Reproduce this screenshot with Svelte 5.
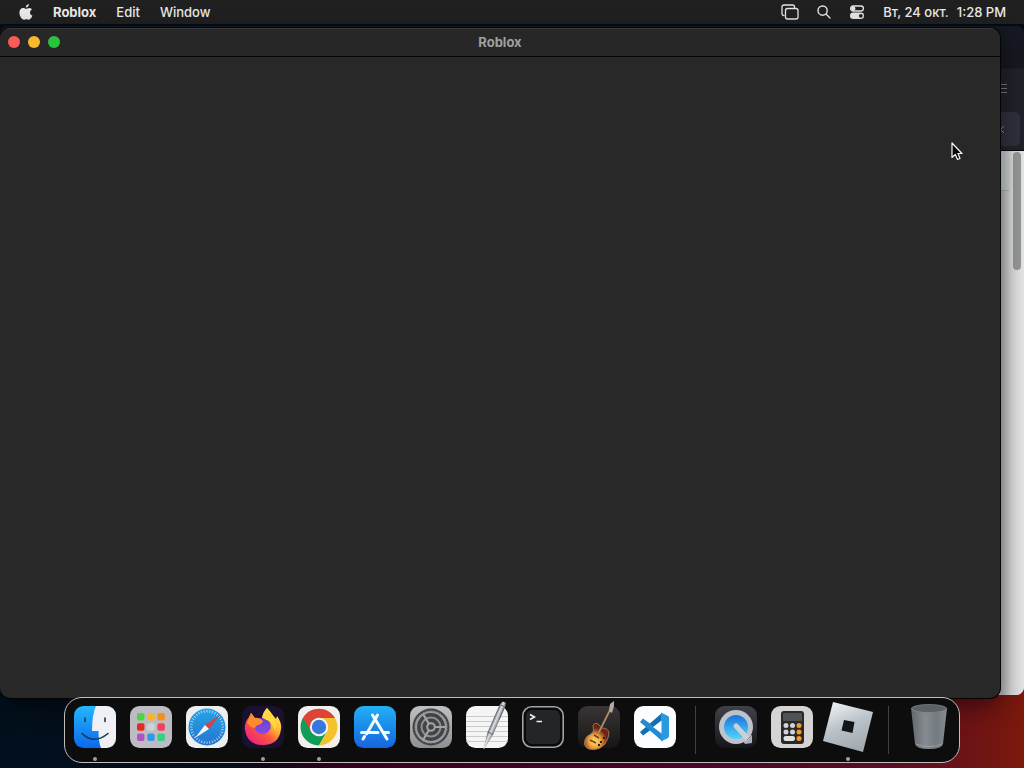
<script lang="ts">
	const menus = ['Edit', 'Window'];

	const groups = [
		[
			{ id: 'finder', label: 'Finder', running: true },
			{ id: 'launchpad', label: 'Launchpad', running: false },
			{ id: 'safari', label: 'Safari', running: false },
			{ id: 'firefox', label: 'Firefox', running: true },
			{ id: 'chrome', label: 'Google Chrome', running: true },
			{ id: 'store', label: 'App Store', running: false },
			{ id: 'settings', label: 'System Preferences', running: false },
			{ id: 'textedit', label: 'TextEdit', running: false },
			{ id: 'terminal', label: 'Terminal', running: false },
			{ id: 'garageband', label: 'GarageBand', running: false },
			{ id: 'vscode', label: 'Visual Studio Code', running: false }
		],
		[
			{ id: 'quicktime', label: 'QuickTime Player', running: false },
			{ id: 'calculator', label: 'Calculator', running: false },
			{ id: 'roblox', label: 'Roblox', running: true }
		],
		[{ id: 'trash', label: 'Trash', running: false }]
	];

	const pads = ['#4fd544', '#f6b52b', '#f5901e', '#e02a24', '#c9d3d8', '#f2415c', '#b052c8', '#2f9be8', '#35cf86'];
	const ticks = Array.from({ length: 36 }, (_, i) => i * 10);
	const teeth = Array.from({ length: 40 }, (_, i) => i * 9);
</script>

<svelte:head>
	<title>Roblox</title>
</svelte:head>

<div class="desktop">
	<header class="menubar">
		<nav>
			<button class="apple" aria-label="Apple menu">
				<svg width="14" height="16" viewBox="0 0 14 16">
					<path
						fill="#e9e9e9"
						d="M9.9 0C10 1.700 8.500 3.500 6.800 3.500 6.600 1.900 8.200.2 9.900 0zM12.900 5.400C11.600 6.200 11 7.200 11 8.400 11 9.900 11.900 11 13.400 11.600 12.800 13.500 11.300 15.800 9.900 15.800 9 15.800 8.500 15.200 7.400 15.200 6.300 15.200 5.700 15.800 4.900 15.800 2.900 15.800.4 12.200.4 8.600.4 5.700 2.200 4 4.100 4 5.400 4 6.400 4.800 7.200 4.800 7.900 4.800 9 3.900 10.500 3.900 11.300 3.900 12.300 4.400 12.900 5.400z"
					/>
				</svg>
			</button>
			<button class="app">Roblox</button>
			{#each menus as menu}
				<button>{menu}</button>
			{/each}
		</nav>
		<div class="status">
			<button aria-label="Screen Mirroring">
				<svg width="18" height="16" viewBox="0 0 18 16" fill="none" stroke="#e4e4e4" stroke-width="1.300">
					<path d="M3.500 11.500H3Q1 11.500 1 9.500V3Q1 1 3 1H11.500Q13.500 1 13.500 3V4" />
					<rect x="4.500" y="4.500" width="12.500" height="10.500" rx="2" />
				</svg>
			</button>
			<button aria-label="Spotlight">
				<svg width="14" height="14" viewBox="0 0 14 14" fill="none" stroke="#e4e4e4" stroke-width="1.400" stroke-linecap="round">
					<circle cx="5.600" cy="5.600" r="4.600" />
					<path d="M9 9L13 13" />
				</svg>
			</button>
			<button aria-label="Control Center">
				<svg width="16" height="14" viewBox="0 0 16 14">
					<rect x="1.600" y="1" width="12.800" height="5" rx="2.500" fill="none" stroke="#e4e4e4" stroke-width="1.300" />
					<circle cx="4.200" cy="3.500" r="2.200" fill="#e4e4e4" />
					<rect x="1" y="7.600" width="14" height="6.400" rx="3.200" fill="#e4e4e4" />
					<circle cx="11.800" cy="10.800" r="1.900" fill="#202020" />
				</svg>
			</button>
			<button class="clock"><span>Вт, 24 окт.</span><span>1:28 PM</span></button>
		</div>
	</header>

	<main class="workspace">
		<section class="browser" aria-label="Browser">
			<div class="browser-top">
				<svg class="lines" width="7" height="11" viewBox="0 0 7 11" stroke="#77757e"><path d="M0 1.500H7M0 5.500H7M0 9.500H7" /></svg>
				<div class="tab">
					<svg width="7" height="9" viewBox="0 0 7 9" fill="none" stroke="#8a8795"><path d="M5 1L1.500 4.500L5 8" /></svg>
				</div>
			</div>
			<div class="page"><div class="page-bar"></div><div class="thumb"></div></div>
		</section>

		<section class="window">
			<div class="titlebar">
				<div class="lights">
					<button class="close" aria-label="Close"></button>
					<button class="minimize" aria-label="Minimize"></button>
					<button class="zoom" aria-label="Zoom"></button>
				</div>
				<h1>Roblox</h1>
			</div>
			<div class="content"></div>
		</section>
	</main>

	<footer>
		<nav class="dock" aria-label="Dock">
			{#each groups as group, i}
				{#if i > 0}<div class="separator"></div>{/if}
				{#each group as item}
					<button class="item" aria-label={item.label}>
						<svg class="icon" width="42" height="42" viewBox="0 0 42 42">
							{#if item.id === 'finder'}
								<defs>
									<linearGradient id="finder-face" x2="0" y2="1"><stop stop-color="#23b8fd" /><stop offset="1" stop-color="#0c68ec" /></linearGradient>
									<clipPath id="finder-clip"><rect width="42" height="42" rx="9.500" /></clipPath>
								</defs>
								<g clip-path="url(#finder-clip)">
									<rect width="42" height="42" fill="url(#finder-face)" />
									<path fill="#eef0f5" d="M22 0H42V42H27Q24.500 36 24.500 25H18Q18 9 22 0z" />
									<path fill="none" stroke="#183750" stroke-width="1.600" stroke-linecap="round" d="M11 12V15.500M31 12V15.500" />
									<path fill="none" stroke="#183750" stroke-width="1.600" stroke-linecap="round" d="M8 27.500Q20 39 34 27.500" />
								</g>
							{:else if item.id === 'launchpad'}
								<rect width="42" height="42" rx="9.500" fill="#bdbcc0" />
								{#each pads as color, n}
									<rect x={7 + (n % 3) * 10.200} y={7 + Math.floor(n / 3) * 10.200} width="7.500" height="7.500" rx="2" fill={color} />
								{/each}
							{:else if item.id === 'safari'}
								<defs><linearGradient id="safari-dial" x2="0" y2="1"><stop stop-color="#24a5e7" /><stop offset="1" stop-color="#2774cf" /></linearGradient></defs>
								<rect width="42" height="42" rx="9.500" fill="#eceef0" />
								<circle cx="21" cy="21" r="18.500" fill="url(#safari-dial)" />
								{#each ticks as angle}
									<path d="M21 4V6.500" stroke="#d6effc" stroke-width=".7" transform="rotate({angle} 21 21)" />
								{/each}
								<path fill="#dd3d43" d="M34 9L19 19L23 23z" />
								<path fill="#f4f4f4" d="M9 32L19 19L23 23z" />
							{:else if item.id === 'firefox'}
								<defs>
									<linearGradient id="fox-body" x1=".9" y1=".1" x2=".2" y2=".9"><stop stop-color="#fff04a" /><stop offset=".35" stop-color="#ffb833" /><stop offset=".65" stop-color="#fc5440" /><stop offset="1" stop-color="#ee2975" /></linearGradient>
									<linearGradient id="fox-globe" x2="0" y2="1"><stop stop-color="#6a3fc4" /><stop offset="1" stop-color="#8b4be8" /></linearGradient>
								</defs>
								<rect width="42" height="42" rx="9.500" fill="#1a1030" />
								<path fill="url(#fox-body)" d="M25 2Q29 7 34 13L35 10Q40 17 39 23Q37 39 21 39Q5 39 3 24Q2 17 7 11L9 7L13 12L20 13Q21 6 25 2z" />
								<circle cx="20.500" cy="20" r="8.300" fill="url(#fox-globe)" />
								<path fill="#ff8a2b" d="M5 17L9 7L13 12Q17 11 21 15Q20 18 16 19Q13 20 13 22L9 21z" />
								<path fill="#ffd83f" d="M25 2Q29 6 31 10Q36 17 33 25Q31 18 27 15Q20 12 20 11Q21 6 25 2z" />
							{:else if item.id === 'chrome'}
								<rect width="42" height="42" rx="9.500" fill="#f2f0ec" />
								<path fill="#0f9d58" d="M21 21L5 11.800A18.500 18.500 0 0 0 21 39.500L29 25.500z" />
								<path fill="#f4c22f" d="M21 12H37A18.500 18.500 0 0 1 21 39.500L29 25.500z" />
								<path fill="#db4437" d="M5 11.800L13 25.500L21 21V12H37A18.500 18.500 0 0 0 5 11.800z" />
								<circle cx="21" cy="21" r="9.200" fill="#f5f3ef" />
								<circle cx="21" cy="21" r="7.200" fill="#3878db" />
							{:else if item.id === 'store'}
								<defs><linearGradient id="store-bg" x2="0" y2="1"><stop stop-color="#21b1f5" /><stop offset="1" stop-color="#1664de" /></linearGradient></defs>
								<rect width="42" height="42" rx="9.500" fill="url(#store-bg)" />
								<path fill="none" stroke="#f4fbff" stroke-width="3" stroke-linecap="round" d="M23.500 9L12.500 28M18.500 9L33 33M7.500 26.500H24M29.500 26.500H34.500M10.500 30.500L9 33" />
							{:else if item.id === 'settings'}
								<defs><linearGradient id="settings-bg" x2="0" y2="1"><stop stop-color="#bfc0c2" /><stop offset="1" stop-color="#8f9092" /></linearGradient></defs>
								<rect width="42" height="42" rx="9.500" fill="url(#settings-bg)" />
								<circle cx="21" cy="21" r="18.500" fill="#414347" />
								<circle cx="21" cy="21" r="15" fill="none" stroke="#9b9da0" stroke-width="2.200" />
								{#each teeth as angle}
									<path d="M21 4V6" stroke="#86888b" stroke-width=".8" transform="rotate({angle} 21 21)" />
								{/each}
								<g fill="none" stroke="#a3a5a8">
									<circle cx="21" cy="21" r="9.500" stroke-width="2" stroke="#8d9093" />
									<path d="M19 18L13 8M19 24L13 34M23 21H35" stroke-width="2.200" />
									<circle cx="21" cy="21" r="3.800" fill="#414347" stroke-width="2" />
								</g>
							{:else if item.id === 'textedit'}
								<defs><linearGradient id="pen"><stop stop-color="#565b60" /><stop offset=".45" stop-color="#e0e3e5" /><stop offset="1" stop-color="#747a80" /></linearGradient></defs>
								<rect width="42" height="42" rx="9.500" fill="#f5f5f5" />
								<path stroke="#bfc0c3" stroke-width=".8" d="M0 10.500H42M0 15.500H42M0 20.500H42M0 25.500H42M0 30.500H42M0 35.500H42" />
								<g transform="translate(38 -4) rotate(23.500)">
									<path fill="url(#pen)" d="M-1.500 0H2L3 4V34L.6 51L-.4 51L-3 34V4z" />
									<path stroke="#64696e" stroke-width="1" d="M-2 4H3M-3 34H3M2.500 5V18" />
								</g>
							{:else if item.id === 'terminal'}
								<rect x=".8" y=".8" width="40.400" height="40.400" rx="9" fill="#090a0b" stroke="#a2a5a5" stroke-width="1.600" />
								<rect x="4" y="4" width="34" height="34" rx="6" fill="#232526" />
								<path fill="none" stroke="#f4f4f4" stroke-width="1.500" d="M8 8.500L12.500 11L8 13.500M14.500 15.500H20" />
							{:else if item.id === 'garageband'}
								<defs>
									<radialGradient id="guitar" cx=".42" cy=".68"><stop stop-color="#ffe46a" /><stop offset=".5" stop-color="#f0a038" /><stop offset="1" stop-color="#702313" /></radialGradient>
									<linearGradient id="guitar-bg" x2="0" y2="1"><stop stop-color="#393536" /><stop offset="1" stop-color="#171515" /></linearGradient>
								</defs>
								<rect width="42" height="42" rx="9.500" fill="url(#guitar-bg)" />
								<path fill="url(#guitar)" stroke="#bc9474" stroke-width=".7" d="M15 20Q16 16 20 18L24 22Q30 22 31 27L30 32Q28 39 22 42Q14 45 9 42Q5 39 7 34Q8 30 13 28Q17 25 15 20z" />
								<path stroke="#7d604c" stroke-width="2.400" d="M20 28L33 2" />
								<path stroke="#d2ae84" stroke-width=".8" d="M16 36L33 2" />
								<path fill="#b5aaa0" d="M31 5L32-2L36-5L36 0L34 7z" />
								<path stroke="#6a4524" stroke-width="1.500" d="M12 34L18 37M16 29L21 32" />
								<path fill="#222" d="M22 35h2v2h-2zM20 38h2v2h-2zM25 31h2v2h-2z" />
							{:else if item.id === 'vscode'}
								<rect width="42" height="42" rx="9.500" fill="#fcfdfe" />
								<path fill="#126fb4" d="M28 7L6 26L9 29.500L29 15z" />
								<path fill="#1f8bd3" d="M28 35L6 16L9 12.500L29 27z" />
								<path fill="#2899df" d="M27 6.500L34 10Q35 10.500 35 12V30Q35 31.500 34 32L27 35.500z" />
								<path fill="#fcfdfe" d="M27.500 14.500V27.500L19 21z" />
							{:else if item.id === 'quicktime'}
								<defs>
									<linearGradient id="qt-bg" x2="0" y2="1"><stop stop-color="#414249" /><stop offset="1" stop-color="#151619" /></linearGradient>
									<linearGradient id="qt-blue" x2="0" y2="1"><stop stop-color="#1d72d8" /><stop offset="1" stop-color="#4fd6fa" /></linearGradient>
								</defs>
								<rect width="42" height="42" rx="9.500" fill="url(#qt-bg)" />
								<path fill="#a8b0bc" d="M28 35L35 28L37 30V37L30 38z" />
								<circle cx="21" cy="21" r="17" fill="#bec2cb" />
								<circle cx="21" cy="21" r="12" fill="url(#qt-blue)" />
								<path stroke="#cbd0d9" stroke-width="5" stroke-linecap="round" d="M21 20L32 32" />
								<path stroke="#7c828e" stroke-width="1" d="M32 34L37 29" />
							{:else if item.id === 'calculator'}
								<rect width="42" height="42" rx="9.500" fill="#d5d4d3" />
								<rect x="10" y="5" width="23" height="33" rx="3" fill="#29292b" />
								<rect x="12" y="7" width="19" height="8" rx="1" fill="#505356" />
								{#each [0, 1] as row}
									{#each [0, 1, 2] as col}
										<circle cx={15 + col * 6.500} cy={19.500 + row * 6.500} r="2.500" fill={col === 2 ? '#f89a28' : '#d3d3d5'} />
									{/each}
								{/each}
								<rect x="12.500" y="30" width="11.500" height="5" rx="2.200" fill="#e3e3e4" />
								<circle cx="28" cy="32.500" r="2.500" fill="#f89a28" />
							{:else if item.id === 'roblox'}
								<defs><linearGradient id="roblox-metal" x1=".2" x2=".6" y2="1"><stop stop-color="#eef1f3" /><stop offset=".5" stop-color="#b9c2c8" /><stop offset="1" stop-color="#a0a9b0" /></linearGradient></defs>
								<path fill="url(#roblox-metal)" d="M6-4L46 6L36 46L-4 35z" />
								<path fill="#131619" d="M17 14L27.500 16L25.500 27L14.500 24.500z" />
							{:else}
								<defs><linearGradient id="bin"><stop stop-color="#62686b" /><stop offset=".4" stop-color="#858b90" /><stop offset=".7" stop-color="#747b80" /><stop offset="1" stop-color="#858b90" /></linearGradient></defs>
								<path fill="url(#bin)" d="M3 2Q21-4 39 2L35 38Q34 43 21 43Q8 43 7 38z" />
								<ellipse cx="21" cy="2.500" rx="17.500" ry="4" fill="#5b6165" stroke="#858b90" stroke-width=".7" />
								<path fill="none" stroke="#a4abb0" stroke-width=".7" d="M8 38Q21 43 34 38" />
							{/if}
						</svg>
						{#if item.running}<span class="dot"></span>{/if}
					</button>
				{/each}
			{/each}
		</nav>
	</footer>

	<svg class="cursor" width="12" height="19" viewBox="0 0 12 19">
		<path fill="#090909" stroke="#f4f4f4" stroke-width="1.200" stroke-linejoin="round" d="M1 1V15.500L4.300 12.500L6.500 17.500L9 16.500L7 11.500H11z" />
	</svg>
</div>

<style>
	:global(body) {
		margin: 0;
	}

	.desktop {
		position: relative;
		display: flex;
		flex-direction: column;
		min-height: 100vh;
		overflow: hidden;
		background:
			linear-gradient(#020d18 40%, transparent 80%),
			linear-gradient(90deg, #02101d 0%, #070b19 24%, #35001a 34%, #4b0628 70%, #5c0c23 88%, #7b190c 100%);
		color: #e9e9e9;
		font-family: Inter, 'Noto Sans', sans-serif;
		font-size: 13px;
	}

	button {
		margin: 0;
		padding: 0;
		border: 0;
		background: none;
		color: inherit;
		font: inherit;
	}

	.menubar,
	.menubar nav,
	.status,
	.clock {
		display: flex;
		align-items: center;
	}

	.menubar {
		justify-content: space-between;
		height: 24px;
		padding: 0 18px 0 19px;
		background: #202020;
	}

	.menubar nav {
		gap: 20px;
	}

	.menubar button {
		font-weight: 500;
	}

	.menubar svg {
		display: block;
	}

	.menubar .app {
		font-weight: 700;
	}

	.status {
		gap: 18px;
	}

	.clock {
		gap: 8px;
	}

	.workspace {
		position: relative;
		display: flex;
		flex: 1;
		padding: 4px 24px 0 0;
	}

	.browser {
		position: absolute;
		inset: 1px 0 3px auto;
		display: flex;
		flex-direction: column;
		width: 100%;
		overflow: hidden;
		box-sizing: border-box;
		border-top: 1px solid #090a0d;
		border-radius: 8px;
		background: #1b1b24;
	}

	.browser-top {
		display: flex;
		flex-direction: column;
		align-items: flex-end;
		justify-content: flex-end;
		height: 124px;
		border-bottom: 1px solid #08080b;
		background: linear-gradient(#151923 0, #171820 42px, #212129 43px);
	}

	.lines {
		margin: 0 17px 18px 0;
	}

	.tab {
		display: flex;
		align-items: center;
		justify-content: flex-end;
		width: 200px;
		height: 34px;
		margin: 0 4px 4px 0;
		padding-right: 14px;
		box-sizing: border-box;
		border-radius: 5px;
		background: #302f3d;
	}

	.page {
		display: flex;
		flex: 1;
		align-items: flex-start;
		justify-content: flex-end;
		background: linear-gradient(90deg, transparent calc(100% - 24px), #b5b5b5 calc(100% - 23px), #d7d7d7 calc(100% - 12px), #e5e5e5) #d0d0d0;
	}

	.page-bar {
		width: 40px;
		height: 39px;
		border-bottom: 1px solid #aaadad;
		background: linear-gradient(90deg, #b7bcbc, #c6cbcb);
	}

	.thumb {
		width: 8px;
		height: 118px;
		margin: 1px 3px 0 4px;
		border-radius: 4px;
		background: #929695;
	}

	.window {
		position: relative;
		display: flex;
		flex: 1;
		flex-direction: column;
		overflow: hidden;
		border-radius: 10px;
		background: #282828;
		box-shadow: 0 0 0 1px #050505, 0 8px 24px rgba(0, 0, 0, 0.5);
	}

	.titlebar {
		display: grid;
		grid-template-columns: 1fr auto 1fr;
		align-items: center;
		height: 28px;
		border-bottom: 1px solid #030303;
		background: #272727;
		box-shadow: inset 0 1px #3b3b3b;
	}

	.lights {
		display: flex;
		gap: 8px;
		padding-left: 8px;
	}

	.lights button {
		width: 12px;
		height: 12px;
		border-radius: 50%;
	}

	.close {
		background: #fa5c55;
	}

	.minimize {
		background: #f8b92f;
	}

	.zoom {
		background: #28c53c;
	}

	h1 {
		margin: 0;
		color: #a0a0a0;
		font-size: 13px;
		font-weight: 700;
	}

	.content {
		flex: 1;
	}

	footer {
		display: flex;
		justify-content: center;
		padding-bottom: 5px;
	}

	.dock {
		position: relative;
		display: flex;
		height: 64px;
		margin-top: -1px;
		padding: 0 2px;
		border: 1px solid #c1bdbd;
		border-radius: 18px;
		background: #0d0d0e;
	}

	.item {
		position: relative;
		display: flex;
		align-items: flex-start;
		width: 56px;
		padding-top: 8px;
	}

	.icon {
		display: block;
		margin: 0 auto;
		overflow: visible;
	}

	.dot {
		position: absolute;
		bottom: 1px;
		left: 26px;
		width: 4px;
		height: 4px;
		border-radius: 50%;
		background: #a0a0a0;
	}

	.separator {
		width: 1px;
		margin: 8px 12px;
		background: #414141;
	}

	.cursor {
		position: absolute;
		top: 142px;
		left: 951px;
		pointer-events: none;
	}
</style>
